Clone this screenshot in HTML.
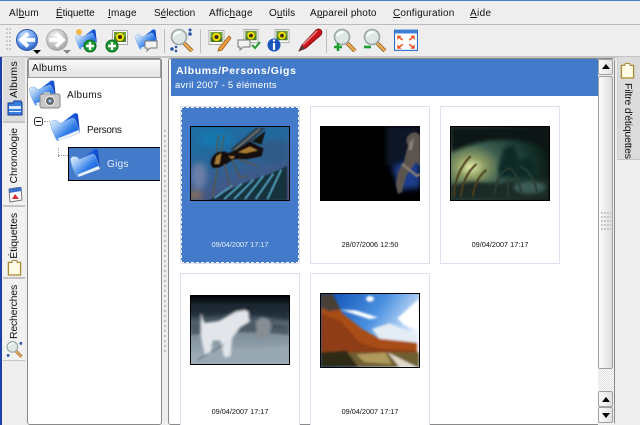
<!DOCTYPE html>
<html lang="fr"><head><meta charset="utf-8"><title>Albums</title>
<style>
html,body{margin:0;padding:0}
body{width:640px;height:425px;overflow:hidden;background:#eeeeee;position:relative;font-family:"Liberation Sans",sans-serif;color:#111}
.a{position:absolute}
.m{position:absolute;top:7px;font-size:10px;line-height:13px;white-space:nowrap}
.m u{text-decoration-thickness:1px;text-underline-offset:1px}
.ti{position:absolute;top:28px;width:24px;height:24px;overflow:visible}
.sep{position:absolute;top:29px;width:1px;height:24px;background:#bdbdbd}
.tab{position:absolute;left:3px;width:22px;background:#f1f1f1;border-bottom:2px solid #c4c4c4;box-sizing:border-box}
.vt{position:absolute;font-size:10.500px;line-height:12px;white-space:nowrap;writing-mode:vertical-rl;transform:rotate(180deg)}
.card{position:absolute;width:120px;height:158px;box-sizing:border-box;border:1px solid #e0dff0;background:#fff}
.dt{position:absolute;width:120px;text-align:center;font-size:7.300px;line-height:10px;white-space:nowrap;color:#111}
.th{position:absolute;box-sizing:border-box;border:1px solid #000;overflow:hidden;background:#000}
.th svg{display:block;width:100%;height:100%}
.dots{position:absolute;width:3px;background-image:radial-gradient(circle at 1px 1px,#bbb 1px,transparent 1.2px);background-size:3px 5px}
</style></head><body>
<svg width="0" height="0" style="position:absolute"><defs>
<linearGradient id="fb" x1="0" y1="0" x2="1" y2="1"><stop offset="0" stop-color="#5f9ef0"/><stop offset=".4" stop-color="#1555d8"/><stop offset="1" stop-color="#0a2a9c"/></linearGradient>
<linearGradient id="ff" x1="0" y1="0" x2="1" y2=".8"><stop offset="0" stop-color="#f4f9ff"/><stop offset=".3" stop-color="#a8ccf6"/><stop offset=".65" stop-color="#2f7ce8"/><stop offset="1" stop-color="#0f52d0"/></linearGradient>
<radialGradient id="bb" cx=".4" cy=".3" r=".8"><stop offset="0" stop-color="#d4e6ff"/><stop offset=".6" stop-color="#5c94ea"/><stop offset="1" stop-color="#1f4aa8"/></radialGradient>
<radialGradient id="gb" cx=".4" cy=".3" r=".8"><stop offset="0" stop-color="#f4f4f4"/><stop offset="1" stop-color="#9a9a9a"/></radialGradient>
<symbol id="folder" viewBox="0 0 30 28"><path d="M9 12 24 .5q3-1 4 1L30 20 14 26Z" fill="url(#fb)"/><path d="M.5 11q0-3 3-3.500 4-.5 6 3l13-5.500q2 0 3 2.500l4.500 12L9 27.500q-2 .5-3-1.500L2 17Z" fill="url(#ff)" stroke="#7aa8e8" stroke-width=".6"/><path d="M7.500 25.500 28.500 17l1.500 3L9 27.800Z" fill="#e8eef8"/></symbol>
<symbol id="lens" viewBox="0 0 24 24"><path d="M14 15 22 23" stroke="#8a5a20" stroke-width="4"/><path d="M14 15 22 23" stroke="#eeaa55" stroke-width="2.400"/><circle cx="9" cy="9" r="7.500" fill="#dfe6e6" stroke="#9aa5a5" stroke-width="1.600"/><path d="M4 8q2-4 7-4" stroke="#fff" stroke-width="2" fill="none"/></symbol>
<symbol id="photo" viewBox="0 0 16 16"><rect x=".5" y=".5" width="15" height="14" fill="#fff" stroke="#aaa"/><rect x="2" y="2" width="12" height="10" fill="#4d7d2a"/><rect x="2" y="2" width="12" height="5" fill="#6f9b3a"/><circle cx="8" cy="7" r="4" fill="#f6e000"/><circle cx="8" cy="7" r="2" fill="#3a2a10"/></symbol>
<symbol id="clip" viewBox="0 0 16 18"><path d="M1.500 3.500H5L6 1.500H10L11 3.500H14.500V17H1.500Z" fill="#fffbe6" stroke="#a88a30" stroke-width="1.400"/><rect x="6" y="2" width="4" height="2" fill="#fff"/></symbol>
<symbol id="bub" viewBox="0 0 14 12"><path d="M1 1H13V8H6L3 11V8H1Z" fill="#f2f2f2" stroke="#777"/></symbol>
</defs></svg>

<div class="a" style="left:0;top:0;width:640px;height:1px;background:#4a7cc8"></div>
<div class="m" style="left:9px;letter-spacing:.35px">Al<u>b</u>um</div>
<div class="m" style="left:56px;letter-spacing:-.1px"><u>É</u>tiquette</div>
<div class="m" style="left:108px;letter-spacing:.2px"><u>I</u>mage</div>
<div class="m" style="left:154px;letter-spacing:0">S<u>é</u>lection</div>
<div class="m" style="left:209px;letter-spacing:.25px">Affic<u>h</u>age</div>
<div class="m" style="left:269px;letter-spacing:.1px">O<u>u</u>tils</div>
<div class="m" style="left:310px;letter-spacing:.15px">A<u>p</u>pareil photo</div>
<div class="m" style="left:393px;letter-spacing:.15px"><u>C</u>onfiguration</div>
<div class="m" style="left:470px;letter-spacing:.35px"><u>A</u>ide</div>
<div class="a" style="left:0;top:24px;width:640px;height:1px;background:#bcbcbc"></div>
<div class="a" style="left:0;top:56px;width:640px;height:2px;background:#c4c4c4"></div>
<div class="a" style="left:6px;top:28px;width:5px;height:24px;background-image:radial-gradient(circle at 1px 1px,#c8c8c8 1px,transparent 1.200px);background-size:3px 4px"></div>

<svg class="ti" style="left:15px" viewBox="0 0 24 24"><circle cx="12" cy="12" r="10.500" fill="url(#bb)" stroke="#2a55aa"/><path d="M20 12H9M13 5.500 6 12 13 18.500" stroke="#fff" stroke-width="3.800" fill="none"/></svg>
<svg class="a" style="left:33px;top:50px" width="8" height="5"><path d="M0 0H8L4 4Z" fill="#000"/></svg>
<svg class="ti" style="left:45px" viewBox="0 0 24 24"><circle cx="12" cy="12" r="10.500" fill="url(#gb)" stroke="#aaa"/><path d="M4 12H15M11 5.500 18 12 11 18.500" stroke="#fff" stroke-width="3.800" fill="none"/></svg>
<svg class="a" style="left:63px;top:50px" width="8" height="5"><path d="M0 0H8L4 4Z" fill="#888"/></svg>
<svg class="ti" style="left:75px" viewBox="0 0 24 24"><use href="#folder" width="22" height="21" x="0" y="1"/><circle cx="4" cy="4" r="3" fill="#f5b94a"/><circle cx="15" cy="18" r="6" fill="#1a9a30" stroke="#0e6a20"/><path d="M15 14V22M11 18H19" stroke="#fff" stroke-width="2.400"/></svg>
<svg class="ti" style="left:105px" viewBox="0 0 24 24"><use href="#photo" x="7" y="2" width="16" height="16"/><circle cx="7" cy="18" r="6" fill="#1a9a30" stroke="#0e6a20"/><path d="M7 14V22M3 18H11" stroke="#fff" stroke-width="2.400"/></svg>
<svg class="ti" style="left:135px" viewBox="0 0 24 24"><use href="#folder" width="22" height="21" x="0" y="1"/><use href="#bub" x="9" y="12" width="14" height="12"/></svg>
<div class="sep" style="left:164px"></div>
<svg class="ti" style="left:170px" viewBox="0 0 24 24"><use href="#lens" width="24" height="24"/><circle cx="20" cy="2" r="1.500" fill="#2a55aa"/><circle cx="20" cy="6" r="1.800" fill="#2a55aa"/><circle cx="2" cy="21" r="1.800" fill="#2a55aa"/><circle cx="6" cy="19" r="1.300" fill="#2a55aa"/><circle cx="6" cy="23" r="1.300" fill="#2a55aa"/></svg>
<div class="sep" style="left:200px"></div>
<svg class="ti" style="left:207px" viewBox="0 0 24 24"><use href="#photo" x="1" y="2" width="17" height="16"/><path d="M12 20 22 8l2 2L15 22l-4 1Z" fill="#f0a040" stroke="#a05a10" stroke-width=".8"/></svg>
<svg class="ti" style="left:237px" viewBox="0 0 24 24"><use href="#photo" x="6" y="1" width="16" height="15"/><use href="#bub" x="0" y="11" width="14" height="12"/><path d="M15 17 18 20 23 14" stroke="#2a9a30" stroke-width="2" fill="none"/></svg>
<svg class="ti" style="left:267px" viewBox="0 0 24 24"><use href="#photo" x="7" y="1" width="16" height="15"/><circle cx="7" cy="17" r="6.500" fill="#1a55bb"/><path d="M7 15V22M7 11.500V13.500" stroke="#fff" stroke-width="2.200"/></svg>
<svg class="ti" style="left:298px" viewBox="0 0 24 24"><path d="M1 23 4 17 18 2q3-2 5 0t0 5L8 20Z" fill="#c9141c" stroke="#7a0a10" stroke-width=".8"/><path d="M5 17 19 3" stroke="#f08a8a" stroke-width="1.500"/><path d="M1 23 4 18 7 20Z" fill="#444"/></svg>
<div class="sep" style="left:326px"></div>
<svg class="ti" style="left:333px" viewBox="0 0 24 24"><use href="#lens" width="24" height="24"/><path d="M5 15V23M1 19H9" stroke="#19a030" stroke-width="2.600"/></svg>
<svg class="ti" style="left:363px" viewBox="0 0 24 24"><use href="#lens" width="24" height="24"/><path d="M1 19H8" stroke="#19a030" stroke-width="2.600"/></svg>
<svg class="ti" style="left:394px" viewBox="0 0 22 20"><rect x=".5" y="1" width="21" height="18.500" fill="#fff" stroke="#2a6ac8"/><rect x="1" y="1" width="20" height="3" fill="#3a80d8"/><path d="M3 6H7L3 10ZM19 6H15L19 10ZM3 18H7L3 14ZM19 18H15L19 14Z" fill="#ee5522"/><path d="M4 7 8 10M18 7 14 10M4 17 8 14M18 17 14 14" stroke="#ee5522" stroke-width="1.500"/></svg>

<!-- left tabs -->
<div class="a" style="left:0;top:57px;width:2px;height:368px;background:#1c3fa8"></div>
<div class="tab" style="top:57px;height:66px;background:#dcdcdc"></div>
<div class="tab" style="top:123px;height:84px"></div>
<div class="tab" style="top:207px;height:72px"></div>
<div class="tab" style="top:279px;height:82px;border-bottom:1px solid #c4c4c4"></div>
<div class="vt" style="left:8px;top:61px;letter-spacing:.3px">Albums</div>
<svg class="a" style="left:7px;top:100px" width="16" height="16" viewBox="0 0 16 16"><path d="M1 3H6L7 1H14L15 3V15H1Z" fill="#3a7fe0" stroke="#123a90"/><path d="M2 6H14V9H2Z" fill="#dcebff"/><path d="M2 11.500H14" stroke="#e4f0ff"/></svg>
<div class="vt" style="left:8px;top:128px;letter-spacing:-.1px">Chronologie</div>
<svg class="a" style="left:7px;top:187px" width="16" height="16" viewBox="0 0 16 16"><path d="M2 2 14 0 15 13 3 15Z" fill="#fff" stroke="#777"/><path d="M2 2 14 0 14.300 4 2.300 6Z" fill="#3a70cc"/><path d="M8 7 12 12H5Z" fill="#d93030"/></svg>
<div class="vt" style="left:8px;top:213px;letter-spacing:-.1px">Étiquettes</div>
<svg class="a" style="left:7px;top:259px;" width="15" height="17"><use href="#clip" width="15" height="17"/></svg>
<div class="vt" style="left:8px;top:285px;letter-spacing:-.2px">Recherches</div>
<svg class="a" style="left:6px;top:340px" width="17" height="18" viewBox="0 0 24 24"><use href="#lens" width="24" height="24"/><circle cx="21" cy="4" r="2" fill="#2a55aa"/><circle cx="3" cy="21" r="2" fill="#2a55aa"/></svg>

<!-- tree panel -->
<div class="a" style="left:27px;top:58px;width:135px;height:367px;box-sizing:border-box;background:#fff;border:1px solid #8a8a8a;border-radius:3px"></div>
<div class="a" style="left:28px;top:59px;width:133px;height:19px;box-sizing:border-box;background:linear-gradient(#fafafa,#e2e2e2);border:1px solid #9c9c9c;font-size:10px;line-height:17px;padding-left:3px;letter-spacing:.3px">Albums</div>
<svg class="a" style="left:29px;top:80px" width="32" height="32"><use href="#folder" width="27" height="26" x="0" y="0"/><rect x="11" y="14" width="20" height="14" rx="2" fill="#c8c8c8" stroke="#888"/><rect x="15" y="12" width="6" height="3" fill="#bbb"/><circle cx="21" cy="21" r="4.500" fill="#666" stroke="#eee"/><circle cx="21" cy="21" r="1.500" fill="#9cf"/></svg>
<div class="a" style="left:67px;top:89px;font-size:10px;line-height:13px;letter-spacing:.3px">Albums</div>
<div class="a" style="left:34px;top:117px;width:9px;height:9px;box-sizing:border-box;border:1px solid #333;border-radius:3px;background:#fff"></div>
<div class="a" style="left:36px;top:121px;width:5px;height:1px;background:#000"></div>
<div class="a" style="left:44px;top:121px;width:6px;border-top:1px dotted #999"></div>
<div class="a" style="left:58px;top:148px;height:9px;border-left:1px dotted #999"></div>
<div class="a" style="left:58px;top:155px;width:10px;border-top:1px dotted #999"></div>
<svg class="a" style="left:50px;top:113px" width="30" height="28"><use href="#folder" width="30" height="28"/></svg>
<div class="a" style="left:87px;top:124px;font-size:10px;line-height:13px;letter-spacing:-.3px">Persons</div>
<div class="a" style="left:68px;top:147px;width:92px;height:34px;box-sizing:border-box;background:#437bca;border:1px solid #000;border-right:0"></div>
<svg class="a" style="left:70px;top:149px" width="30" height="28"><use href="#folder" width="30" height="28"/></svg>
<div class="a" style="left:107px;top:158px;font-size:10px;line-height:13px;color:#e8eefa;letter-spacing:.3px">Gigs</div>
<div class="dots" style="left:164px;top:130px;height:222px"></div>

<!-- main -->
<div class="a" style="left:168px;top:58px;width:447px;height:367px;box-sizing:border-box;background:#fff;border:1px solid #8a8a8a;border-radius:3px"></div>
<div class="a" style="left:171px;top:59px;width:427px;height:37px;background:#437bca;color:#fff"></div>
<div class="a" style="left:176px;top:65px;font-size:10.500px;line-height:13px;font-weight:bold;color:#fff;letter-spacing:.6px">Albums/Persons/Gigs</div>
<div class="a" style="left:175px;top:80px;font-size:9.500px;line-height:12px;color:#fff;letter-spacing:.25px">avril 2007 - 5 éléments</div>

<div class="card" style="left:180px;top:106px;background:#437bca;border:1px solid #e0dff0"></div>
<div class="a" style="left:181px;top:107px;width:118px;height:156px;box-sizing:border-box;border:1px dashed #fff"></div>
<div class="dt" style="left:180px;top:240px;color:#e8eefa">09/04/2007 17:17</div>
<div class="card" style="left:310px;top:106px"></div><div class="dt" style="left:310px;top:240px">28/07/2006 12:50</div>
<div class="card" style="left:440px;top:106px"></div><div class="dt" style="left:440px;top:240px">09/04/2007 17:17</div>
<div class="card" style="left:180px;top:273px;height:152px;border-bottom:0"></div><div class="dt" style="left:180px;top:407px">09/04/2007 17:17</div>
<div class="card" style="left:310px;top:273px;height:152px;border-bottom:0"></div><div class="dt" style="left:310px;top:407px">09/04/2007 17:17</div>

<div class="th" style="left:190px;top:126px;width:100px;height:75px"><svg viewBox="0 0 100 75" preserveAspectRatio="none"><defs><linearGradient id="t1" x1="0" y1="0" x2=".4" y2="1"><stop offset="0" stop-color="#1d6fa6"/><stop offset=".4" stop-color="#23689c"/><stop offset=".75" stop-color="#3a5c8c"/><stop offset="1" stop-color="#4a5078"/></linearGradient><filter id="b1"><feGaussianBlur stdDeviation=".6"/></filter><filter id="b1b"><feGaussianBlur stdDeviation="3"/></filter></defs><rect width="100" height="75" fill="url(#t1)"/><g filter="url(#b1b)"><ellipse cx="8" cy="50" rx="8" ry="14" fill="#6a7fa8"/><ellipse cx="85" cy="25" rx="14" ry="12" fill="#2e5a88"/><ellipse cx="4" cy="70" rx="8" ry="6" fill="#7a6a60"/><ellipse cx="25" cy="12" rx="18" ry="8" fill="#1878b0"/></g><g filter="url(#b1)"><path d="M18 75Q45 60 70 52 88 46 98 40V75Z" fill="#13303e"/><path d="M24 73 42 60M34 74 52 58M44 74 64 54M55 74 74 50M66 74 84 48M78 74 92 44" stroke="#4f9ab4" stroke-width="1.800"/><path d="M40 23 66 1 76 1 50 26Z" fill="#2e3f4c" opacity=".9"/><path d="M44 24 70 2" stroke="#8c8470" stroke-width="1"/><path d="M62 15 76 4 72 18Z" fill="#191208"/><path d="M20 38Q20 30 27 26 34 24 38 27L48 22 60 15 74 22 72 30 58 33 44 33 36 38 28 42 22 42Z" fill="#140f08"/><path d="M48 26 60 20 68 24 56 27ZM26 30 31 27 29 38 24 38ZM38 30 45 30 42 33Z" fill="#a87a34"/><path d="M27 42 22 72M34 38 40 62M42 34 50 52 58 50M48 33 68 40M26 26 28 8M30 26 34 8" stroke="#5e5238" stroke-width="1.100" fill="none"/></g></svg></div>

<div class="th" style="left:320px;top:126px;width:100px;height:75px;border:0"><svg viewBox="0 0 100 75" preserveAspectRatio="none"><defs><filter id="b2"><feGaussianBlur stdDeviation=".8"/></filter><filter id="b2b"><feGaussianBlur stdDeviation="3"/></filter></defs><rect width="100" height="75" fill="#000"/><g filter="url(#b2b)"><path d="M66 0H100V40H66Z" fill="#0a1226"/><path d="M72 42 100 30V62L80 64Z" fill="#1e3c8c"/></g><g filter="url(#b2)"><path d="M76 60Q76 46 84 36 86 26 88 20 84 12 90 8 97 4 100 10V40L96 36 92 42 86 50 82 66 78 68Z" fill="#5c5450"/><path d="M90 16 94 12 92 24 88 24Z" fill="#8a7e74"/><path d="M82 38 97 50 100 48" stroke="#857a70" stroke-width="2.500" fill="none"/></g></svg></div>

<div class="th" style="left:450px;top:126px;width:100px;height:75px"><svg viewBox="0 0 100 75" preserveAspectRatio="none"><defs><filter id="b3"><feGaussianBlur stdDeviation="1.800"/></filter><filter id="b3s"><feGaussianBlur stdDeviation=".6"/></filter><radialGradient id="g3" cx=".2" cy=".55" r=".85"><stop offset="0" stop-color="#e4ecac"/><stop offset=".16" stop-color="#8e9e64"/><stop offset=".38" stop-color="#3c5c50"/><stop offset=".7" stop-color="#183830"/><stop offset="1" stop-color="#0a1410"/></radialGradient></defs><rect width="100" height="75" fill="url(#g3)"/><g filter="url(#b3)"><path d="M0 0H100V22Q50 2 0 26Z" fill="#0a1712"/><path d="M48 42 54 22 64 18 70 34 80 30 88 44 76 52H50Z" fill="#0e2a26"/><path d="M0 75V60L20 56 50 58 100 52V75Z" fill="#1a2c26"/><ellipse cx="80" cy="62" rx="16" ry="6" fill="#3a5c54"/></g><g filter="url(#b3s)" fill="none"><path d="M3 72Q4 46 20 30M10 72Q12 50 26 38M22 72Q24 54 36 44" stroke="#4a3e1c" stroke-width="2"/><path d="M44 70Q48 46 60 42M72 70Q70 50 60 42M88 68Q84 46 70 40M58 72V50" stroke="#2a3c30" stroke-width="2"/></g></svg></div>

<div class="th" style="left:190px;top:295px;width:100px;height:70px"><svg viewBox="0 0 100 70" preserveAspectRatio="none"><defs><filter id="b4"><feGaussianBlur stdDeviation="1.400"/></filter><linearGradient id="g4" x1="0" y1="0" x2="0" y2="1"><stop offset="0" stop-color="#03060c"/><stop offset=".25" stop-color="#2c3a46"/><stop offset=".55" stop-color="#7e8e9a"/><stop offset="1" stop-color="#a4b4be"/></linearGradient></defs><rect width="100" height="70" fill="url(#g4)"/><g filter="url(#b4)"><path d="M0 8H100V25Q50 14 0 22Z" fill="#1a2632" opacity=".7"/><path d="M0 28Q50 22 100 30V40Q50 34 0 40Z" fill="#4e5c68"/><path d="M0 70 24 52 60 56 100 50V70Z" fill="#98a8b2"/><path d="M10 18 14 28 28 26 46 16 58 14 60 26 50 32 42 44 40 62 34 63 30 46 22 46 20 60 14 60 10 42Z" fill="#e2e6ea"/><path d="M66 26 72 22 80 24 82 32 78 44H68Z" fill="#868e94"/><path d="M6 66 34 50" stroke="#3a4650" stroke-width="1"/><path d="M56 15 60 12" stroke="#111" stroke-width="2.500"/><path d="M84 32H96" stroke="#222" stroke-width="1.500" stroke-dasharray="3 2"/></g></svg></div>

<div class="th" style="left:320px;top:293px;width:100px;height:75px"><svg viewBox="0 0 100 75" preserveAspectRatio="none"><defs><filter id="b5"><feGaussianBlur stdDeviation="1"/></filter><linearGradient id="g5" x1="0" y1="0" x2="1" y2=".5"><stop offset="0" stop-color="#0848b0"/><stop offset=".55" stop-color="#4a90e0"/><stop offset="1" stop-color="#f4f8ff"/></linearGradient></defs><rect width="100" height="75" fill="url(#g5)"/><g filter="url(#b5)"><path d="M78 25 100 5V38L85 32Z" fill="#fff"/><path d="M20 16 50 26 58 24 36 17Z" fill="#fff"/><ellipse cx="50" cy="5" rx="4" ry="3" fill="#fff"/><path d="M52 36 70 30 98 42V56L60 46Z" fill="#e4ecf4"/><path d="M0 6H14L22 20 42 36 60 46 98 50V64H0Z" fill="#a84e18"/><path d="M0 20 20 28 40 50 60 56 98 58V64H0Z" fill="#8e3e12"/><path d="M0 0H12L20 16 8 18 0 14Z" fill="#4a4036"/><path d="M0 60H100V75H0Z" fill="#6e5e30"/><path d="M68 60 98 75H80Z" fill="#e0d8c8"/><path d="M0 60 26 58 38 75H0Z" fill="#2e2c18"/><path d="M36 62 66 60 72 72 44 70Z" fill="#b09a5c"/></g></svg></div>

<!-- scrollbar -->
<div class="a" style="left:598px;top:59px;width:16px;height:366px;background:#f0f0f0"></div>
<div class="a" style="left:598px;top:59px;width:15px;height:16px;box-sizing:border-box;background:linear-gradient(90deg,#fafafa,#e2e2e2);border:1px solid #a0a0a0;border-radius:2px"></div>
<svg class="a" style="left:602px;top:64px" width="8" height="5"><path d="M0 5H8L4 0Z" fill="#000"/></svg>
<div class="a" style="left:598px;top:76px;width:15px;height:293px;box-sizing:border-box;background:linear-gradient(90deg,#fdfdfd,#dcdcdc);border:1px solid #a0a0a0;border-radius:2px"></div>
<div class="a" style="left:601px;top:212px;width:10px;height:18px;background-image:radial-gradient(circle at 1px 1px,#c4c4c4 1px,transparent 1.200px);background-size:3px 4px"></div>
<div class="a" style="left:598px;top:369px;width:15px;height:22px;background:repeating-conic-gradient(#e2e2e2 0 25%,#fafafa 0 50%) 0 0/2px 2px"></div>
<div class="a" style="left:598px;top:391px;width:15px;height:16px;box-sizing:border-box;background:linear-gradient(90deg,#fafafa,#e2e2e2);border:1px solid #a0a0a0;border-radius:2px"></div>
<svg class="a" style="left:602px;top:397px" width="8" height="5"><path d="M0 5H8L4 0Z" fill="#000"/></svg>
<div class="a" style="left:598px;top:407px;width:15px;height:16px;box-sizing:border-box;background:linear-gradient(90deg,#fafafa,#e2e2e2);border:1px solid #a0a0a0;border-radius:2px"></div>
<svg class="a" style="left:602px;top:413px" width="8" height="5"><path d="M0 0H8L4 5Z" fill="#000"/></svg>

<!-- right tab -->
<div class="a" style="left:617px;top:57px;width:23px;height:103px;box-sizing:border-box;background:#dcdcdc;border-bottom:1px solid #c4c4c4;border-left:1px solid #d0d0d0"></div>
<svg class="a" style="left:620px;top:62px" width="15" height="17"><use href="#clip" width="15" height="17"/></svg>
<div class="a" style="left:622px;top:83px;font-size:10.500px;letter-spacing:-.2px;line-height:12px;white-space:nowrap;writing-mode:vertical-rl">Filtre d'étiquettes</div>
</body></html>
